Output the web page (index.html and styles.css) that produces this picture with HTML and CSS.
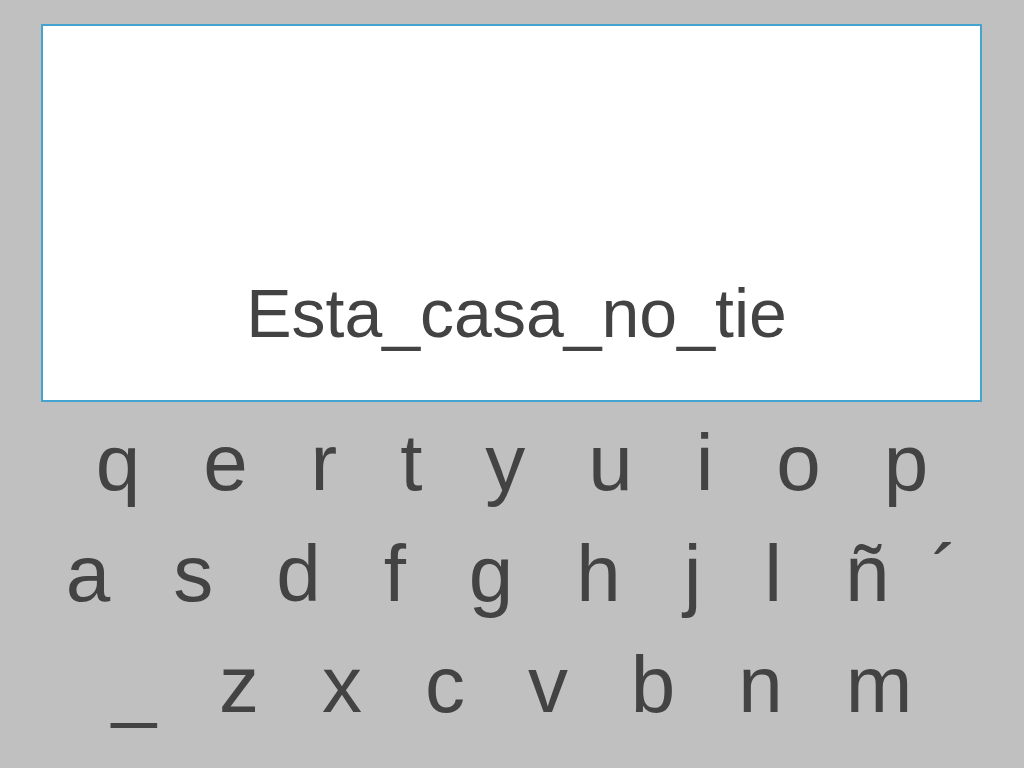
FILE: index.html
```html
<!DOCTYPE html>
<html lang="es">
<head>
    <meta charset="UTF-8">
    <meta name="viewport" content="width=device-width, initial-scale=1.0">
    <title>Teclado</title>
    <link rel="stylesheet" href="styles.css">
</head>
<body>
    <div class="screen">
        <p class="typed">Esta_casa_no_tie</p>
    </div>

    <div class="keyboard">
        <div class="row">q   e   r   t   y   u   i   o   p</div>
        <div class="row">a   s   d   f   g   h   j   l   ñ  ´</div>
        <div class="row">_   z   x   c   v   b   n   m</div>
    </div>
</body>
</html>
```

FILE: styles.css
```css
body {
    margin: 0;
    padding: 0;
    background-color: #c0c0c0;
    font-family: "Liberation Sans", Arial, sans-serif;
    color: #434343;
}

.screen {
    box-sizing: border-box;
    width: 941px;
    height: 378px;
    margin: 24px 0 0 41px;
    background-color: #fff;
    border: 2px solid #45a3cf;
    display: flex;
    flex-direction: column;
    justify-content: flex-end;
    align-items: center;
}

.typed {
    margin: 0 0 53px 0;
    font-size: 68px;
    line-height: 1;
    padding-left: 10px;
}

.keyboard {
    margin-top: 5px;
}

.row {
    white-space: pre;
    text-align: center;
    font-size: 80px;
    line-height: 111px;
    word-spacing: -1.25px;
}
```
